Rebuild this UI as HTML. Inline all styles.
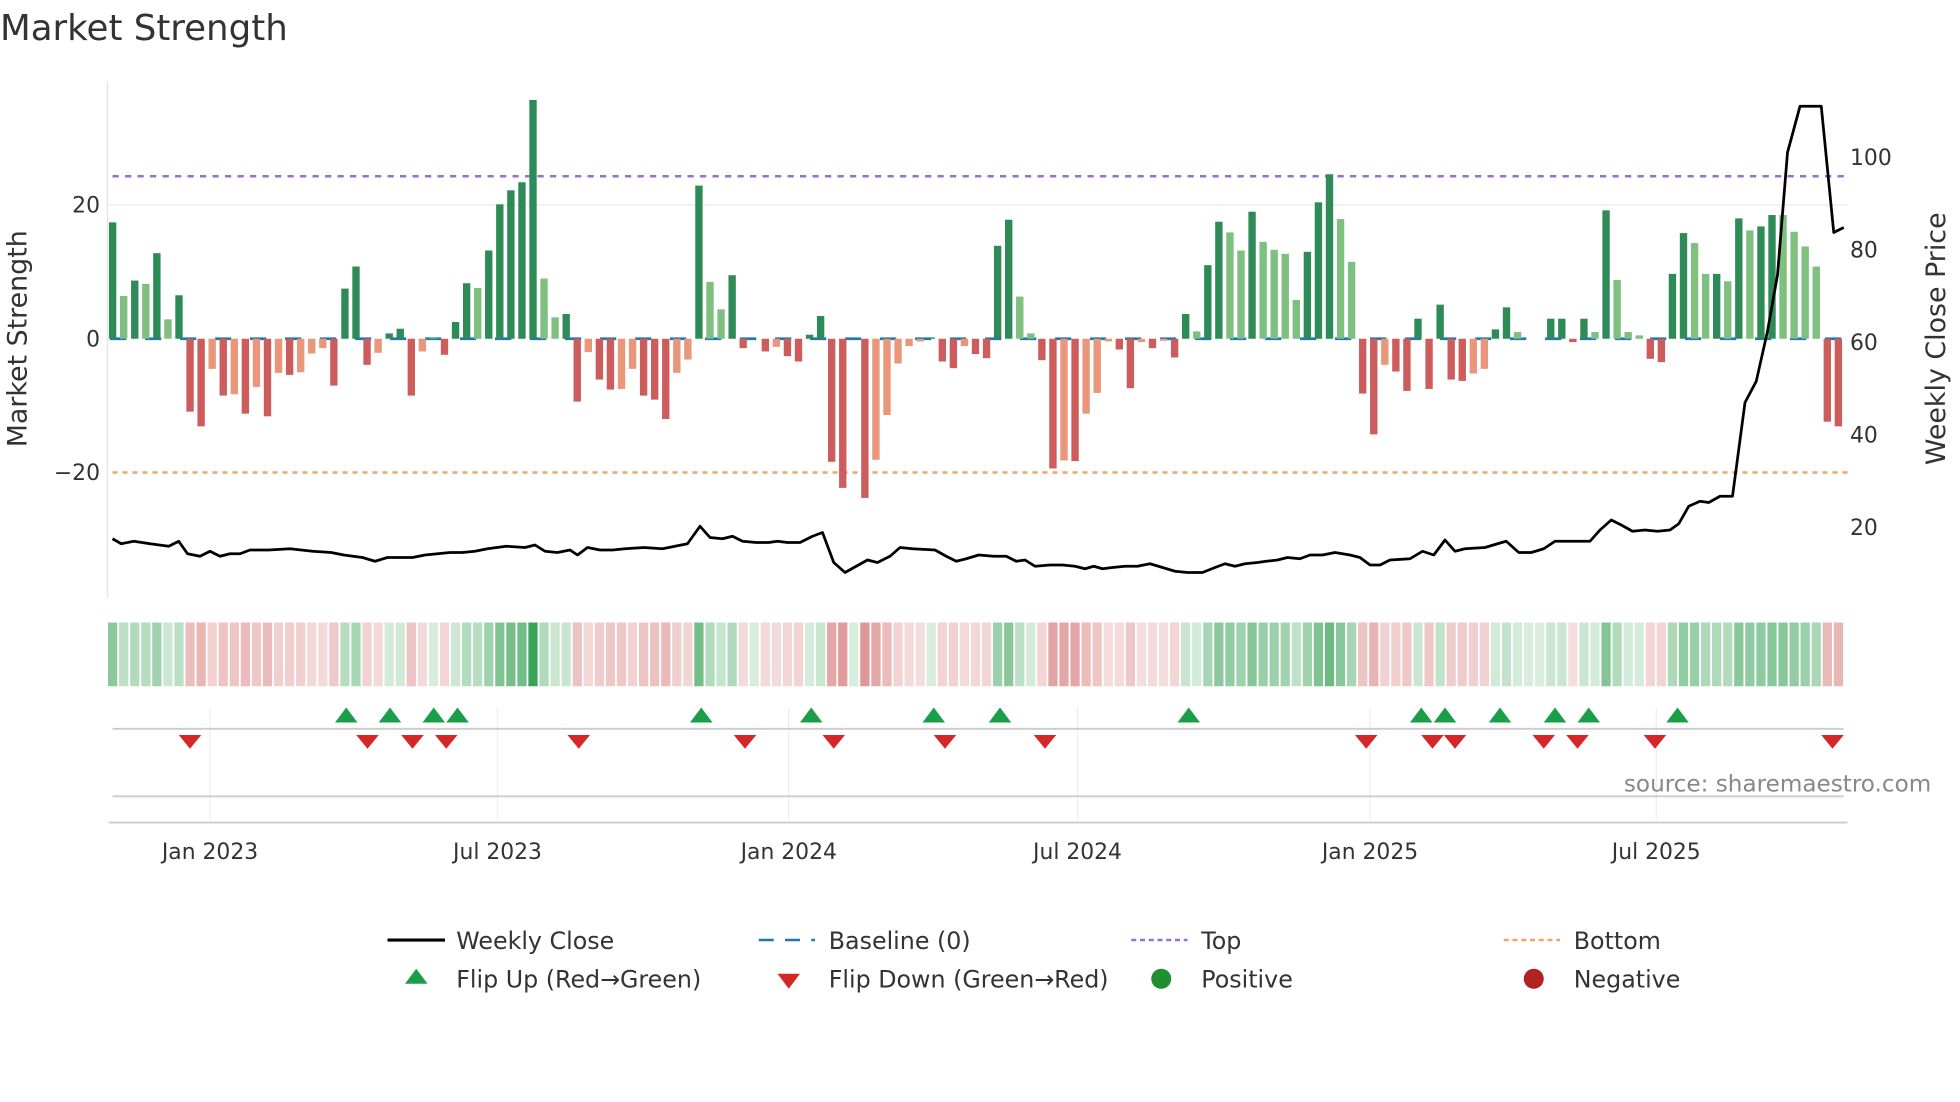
<!DOCTYPE html>
<html><head><meta charset="utf-8"><style>
html,body{margin:0;padding:0;background:#fff;}
svg{display:block;font-family:"DejaVu Sans","Liberation Sans",sans-serif;}
</style></head><body>
<svg id="s" width="1960" height="1102" viewBox="0 0 1568 881.6" xmlns="http://www.w3.org/2000/svg">
<rect width="1568" height="882" fill="#fff"/>
<text x="0" y="32" font-size="28.5" fill="#333">Market Strength</text>
<line x1="86" y1="65" x2="86" y2="478" stroke="#e6e6e6" stroke-width="1.2"/>
<line x1="87" y1="164" x2="1478" y2="164" stroke="#eeeeee" stroke-width="1.2"/>
<g id="base"></g>
<line x1="90" y1="141" x2="1478" y2="141" stroke="#9370db" stroke-width="2" stroke-dasharray="5 5"/>
<line x1="90" y1="378" x2="1478" y2="378" stroke="#f4a460" stroke-width="2" stroke-dasharray="4 4"/>
<g id="bars"></g>
<path id="price" fill="none" stroke="#000" stroke-width="2.2" stroke-linejoin="round"/>
<g font-size="17.5" fill="#333">
<text x="80" y="170" text-anchor="end">20</text>
<text x="80" y="277" text-anchor="end">0</text>
<text x="80" y="384" text-anchor="end">−20</text>
<text x="1480" y="132">100</text>
<text x="1480" y="206">80</text>
<text x="1480" y="280">60</text>
<text x="1480" y="354">40</text>
<text x="1480" y="428">20</text>
</g>
<text transform="translate(21,271) rotate(-90)" text-anchor="middle" font-size="21.5" fill="#333">Market Strength</text>
<text transform="translate(1556,271) rotate(-90)" text-anchor="middle" font-size="21.5" fill="#333">Weekly Close Price</text>
<g id="strip"></g>
<g stroke="#eeeeee" stroke-width="1">
<line x1="168" y1="566" x2="168" y2="656"/><line x1="398" y1="566" x2="398" y2="656"/><line x1="631" y1="566" x2="631" y2="656"/><line x1="862" y1="566" x2="862" y2="656"/><line x1="1096" y1="566" x2="1096" y2="656"/><line x1="1325" y1="566" x2="1325" y2="656"/>
</g>
<line x1="90" y1="583" x2="1475" y2="583" stroke="#cccccc" stroke-width="1.5"/>
<line x1="90" y1="637" x2="1475" y2="637" stroke="#cccccc" stroke-width="1.5"/>
<line x1="87" y1="658" x2="1478" y2="658" stroke="#cccccc" stroke-width="1.5"/>
<g id="flips"></g>
<text x="1545" y="633" text-anchor="end" font-size="18.5" fill="#888">source: sharemaestro.com</text>
<g font-size="17.5" fill="#333" text-anchor="middle">
<text x="168" y="687">Jan 2023</text><text x="398" y="687">Jul 2023</text><text x="631" y="687">Jan 2024</text><text x="862" y="687">Jul 2024</text><text x="1096" y="687">Jan 2025</text><text x="1325" y="687">Jul 2025</text>
</g>
<g font-size="19" fill="#333">
<line x1="310" y1="752" x2="356" y2="752" stroke="#000" stroke-width="2.5"/><text x="365" y="759">Weekly Close</text>
<line x1="607" y1="752" x2="652" y2="752" stroke="#1f77b4" stroke-width="2" stroke-dasharray="12 9"/><text x="663" y="759">Baseline (0)</text>
<line x1="905" y1="752" x2="950" y2="752" stroke="#9370db" stroke-width="2" stroke-dasharray="4 3"/><text x="961" y="759">Top</text>
<line x1="1203" y1="752" x2="1248" y2="752" stroke="#f4a460" stroke-width="2" stroke-dasharray="4 3"/><text x="1259" y="759">Bottom</text>
<polygon points="324,787 342,787 333,775" fill="#1a9e48"/><text x="365" y="790">Flip Up (Red→Green)</text>
<polygon points="622,779 640,779 631,791" fill="#d62728"/><text x="663" y="790">Flip Down (Green→Red)</text>
<circle cx="929" cy="783" r="8" fill="#1f8f2f"/><text x="961" y="790">Positive</text>
<circle cx="1227" cy="783" r="8" fill="#b22222"/><text x="1259" y="790">Negative</text>
</g>
</svg>
<script>
var V=[17.4,6.4,8.7,8.2,12.8,2.9,6.5,-10.9,-13.1,-4.5,-8.5,-8.3,-11.2,-7.2,-11.6,-5.1,-5.4,-5.0,-2.2,-1.4,-7.0,7.5,10.8,-3.9,-2.1,0.8,1.5,-8.5,-1.9,0.1,-2.4,2.5,8.3,7.6,13.2,20.1,22.2,23.4,35.7,9.0,3.2,3.7,-9.4,-2.0,-6.1,-7.6,-7.5,-4.5,-8.5,-9.1,-12.0,-5.1,-3.1,22.9,8.5,4.4,9.5,-1.4,0,-1.9,-1.2,-2.6,-3.4,0.6,3.4,-18.4,-22.3,0,-23.8,-18.1,-11.4,-3.7,-1.1,-0.4,0.2,-3.4,-4.4,-1.1,-2.3,-2.9,13.9,17.8,6.3,0.8,-3.2,-19.4,-18.2,-18.3,-11.2,-8.1,-0.4,-1.6,-7.4,-0.5,-1.4,-0.3,-2.8,3.7,1.1,11.0,17.5,15.9,13.2,19.0,14.5,13.3,12.7,5.8,13.0,20.4,24.6,17.9,11.5,-8.2,-14.3,-3.9,-4.9,-7.8,3.0,-7.5,5.1,-6.1,-6.3,-5.2,-4.5,1.4,4.7,1.0,0,0,3.0,3.0,-0.5,3.0,1.0,19.2,8.8,1.0,0.5,-3,-3.5,9.7,15.8,14.3,9.7,9.7,8.6,18,16.2,16.8,18.5,18.5,16,13.8,10.8,-12.4,-13.1];
var L="0101010001"+"0101010111"+"0000100011"+"0001000001"+"1001001100"+"0110110000"+"1000000001"+"1111000100"+"0011001011"+"1001010010"+"0110111100"+"0110010000"+"0001100100"+"0000101110"+"0001101010"+"0111100";
var ns="http://www.w3.org/2000/svg";
function el(p,t,a){var e=document.createElementNS(ns,t);for(var k in a)e.setAttribute(k,a[k]);p.appendChild(e);return e;}
var bars=document.getElementById('bars'),strip=document.getElementById('strip'),base=document.getElementById('base');
el(base,'line',{x1:88,y1:271,x2:1478,y2:271,stroke:'#1f77b4','stroke-width':2.2,'stroke-dasharray':'13 15'});
function mix(c,t){return 'rgb('+c.map(function(v){return Math.round(255+(v-255)*t)}).join(',')+')';}
for(var i=0;i<V.length;i++){
 var v=V[i],x=90.1+8.85*i,lt=(L[i]=='1');
 var col;
 if(v>=0) col=lt?'#7fbf7f':'#2e8b57'; else col=lt?'#e9967a':'#cd5c5c';
 var h=Math.abs(v)*5.35;
 if(h>0.3) el(bars,'rect',{x:x-2.95,y:v>=0?271-h:271,width:5.9,height:h,fill:col});
 var sc;
 if(v>=0) sc=mix([58,163,87],0.2+0.8*Math.min(1,v/36)); else sc=mix([205,92,92],0.2+0.45*Math.min(1,-v/24));
 el(strip,'rect',{x:x-3.7,y:498,width:7.4,height:51,fill:sc});
}
var P=[[90,431],[97,435],[107,433],[120,435],[135,437],[143,433],[150,443],[160,445],[168,441],[176,445],[184,443],[192,443],[200,440],[215,440],[232,439],[250,441],[265,442],[275,444],[290,446],[300,449],[310,446],[330,446],[340,444],[360,442],[370,442],[380,441],[390,439],[405,437],[420,438],[428,436],[436,441],[446,442],[456,440],[462,444],[470,438],[480,440],[490,440],[500,439],[515,438],[530,439],[540,437],[550,435],[560,421],[568,430],[578,431],[586,429],[594,433],[605,434],[615,434],[622,433],[630,434],[640,434],[650,429],[658,426],[667,450],[676,458],[685,453],[694,448],[702,450],[712,445],[720,438],[730,439],[748,440],[757,445],[765,449],[773,447],[783,444],[795,445],[805,445],[813,449],[820,448],[828,453],[840,452],[850,452],[860,453],[868,455],[875,453],[882,455],[890,454],[900,453],[910,453],[920,451],[930,454],[940,457],[950,458],[962,458],[972,454],[980,451],[988,453],[996,451],[1006,450],[1013,449],[1022,448],[1030,446],[1040,447],[1048,444],[1058,444],[1068,442],[1080,444],[1088,446],[1096,452],[1104,452],[1112,448],[1128,447],[1138,441],[1147,444],[1156,432],[1164,441],[1172,439],[1188,438],[1198,435],[1205,433],[1215,442],[1225,442],[1235,439],[1244,433],[1260,433],[1272,433],[1280,424],[1289,416],[1297,420],[1306,425],[1316,424],[1326,425],[1336,424],[1343,419],[1351,405],[1360,401],[1367,402],[1376,397],[1386,397],[1396,322],[1405,305],[1414,265],[1422,220],[1430,122],[1440,85],[1457,85],[1467,186],[1475,182]];
document.getElementById('price').setAttribute('d','M'+P.map(function(p){return p[0]+','+p[1]}).join(' L'));
var fl=document.getElementById('flips');
[277,312,347,366,561,649,747,800,951,1137,1156,1200,1244,1271,1342].forEach(function(x){el(fl,'polygon',{points:(x-9)+',578 '+(x+9)+',578 '+x+',566',fill:'#1a9e48'});});
[152,294,330,357,463,596,667,756,836,1093,1146,1164,1235,1262,1324,1466].forEach(function(x){el(fl,'polygon',{points:(x-9)+',588 '+(x+9)+',588 '+x+',599',fill:'#d62728'});});
</script>
</body></html>
